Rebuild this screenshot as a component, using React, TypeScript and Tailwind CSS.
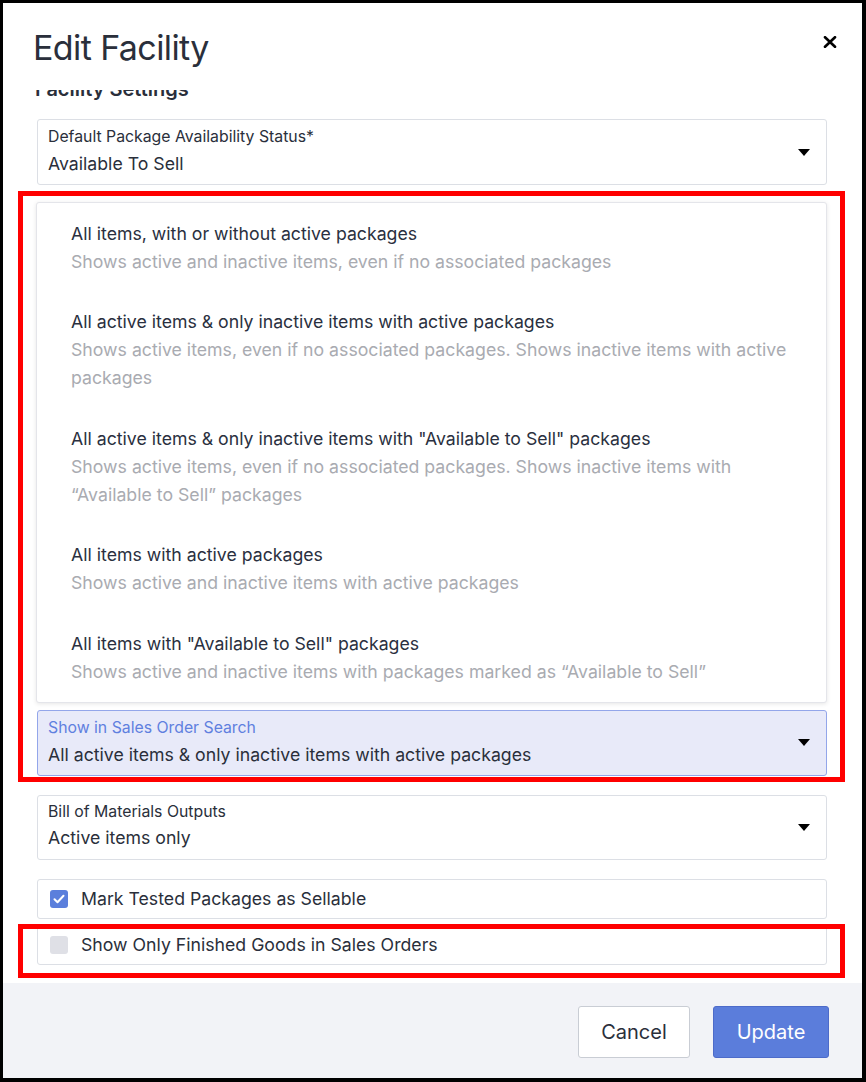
import React from "react";

function Caret() {
  return (
    <svg width="12" height="7" viewBox="0 0 12 7" className="shrink-0">
      <polygon points="0,0 12,0 6,7" fill="#000" />
    </svg>
  );
}

function Select({
  label,
  value,
  focused = false,
  compact = false,
}: {
  label: string;
  value: string;
  focused?: boolean;
  compact?: boolean;
}) {
  return (
    <div
      className={`flex items-center justify-between rounded-[3px] border pl-[10px] pr-[16px] ${
        compact ? "h-[65px]" : "h-[66px]"
      } ${focused ? "border-[#93a6ea] bg-[#e8eaf9]" : "border-[#dcdfe5] bg-white"}`}
    >
      <div className={`flex flex-col self-start ${compact ? "pt-[6px]" : "pt-[7px]"}`}>
        <div className={`text-[15.8px] leading-[20px] ${focused ? "text-[#5f80df]" : "text-[#2a2f3b]"}`}>
          {label}
        </div>
        <div className={`${compact ? "mt-[4px]" : "mt-[5px]"} text-[17.7px] leading-[24px] text-[#2a2f3b]`}>
          {value}
        </div>
      </div>
      <Caret />
    </div>
  );
}

const options: { title: string; desc: string[] }[] = [
  {
    title: "All items, with or without active packages",
    desc: ["Shows active and inactive items, even if no associated packages"],
  },
  {
    title: "All active items & only inactive items with active packages",
    desc: [
      "Shows active items, even if no associated packages. Shows inactive items with active",
      "packages",
    ],
  },
  {
    title: 'All active items & only inactive items with "Available to Sell" packages',
    desc: [
      "Shows active items, even if no associated packages. Shows inactive items with",
      "\u201cAvailable to Sell\u201d packages",
    ],
  },
  {
    title: "All items with active packages",
    desc: ["Shows active and inactive items with active packages"],
  },
  {
    title: 'All items with "Available to Sell" packages',
    desc: ["Shows active and inactive items with packages marked as \u201cAvailable to Sell\u201d"],
  },
];

function CheckRow({ label, checked }: { label: string; checked: boolean }) {
  return (
    <div className="flex h-[40px] items-center gap-[13px] rounded-[3px] border border-[#dcdfe5] bg-white pl-[12px]">
      {checked ? (
        <div className="flex h-[18px] w-[18px] items-center justify-center rounded-[3px] bg-[#5b7fdc]">
          <svg width="12" height="10" viewBox="0 0 12 10">
            <path d="M1.5 5.2l3 3 6-6.4" fill="none" stroke="#fff" strokeWidth="2" strokeLinecap="round" strokeLinejoin="round" />
          </svg>
        </div>
      ) : (
        <div className="h-[18px] w-[18px] rounded-[3px] bg-[#dfe0e6]" />
      )}
      <span className="text-[17.7px] leading-[24px] text-[#2a2f3b]">{label}</span>
    </div>
  );
}

export default function App() {
  return (
    <div className="relative flex h-[1082px] w-[866px] flex-col overflow-hidden border-black border-t-[3px] border-l-[3px] border-r-[4px] border-b-[4px] bg-white font-['Inter',sans-serif] text-[#2a2f3b]">
      <header className="flex h-[87px] shrink-0 items-start justify-between pl-[30px] pr-[25px]">
        <h1 className="mt-[25px] text-[34px] font-normal leading-[40px] tracking-[-0.6px] text-[#2a2f3b]">Edit Facility</h1>
        <button className="mt-[33px]" aria-label="Close">
          <svg width="14" height="12" viewBox="0 0 14 12">
            <path d="M2 1.2l10 9.6M12 1.2L2 10.8" stroke="#000" strokeWidth="2.6" strokeLinecap="round" />
          </svg>
        </button>
      </header>

      <div className="flex-1 overflow-hidden pl-[34px] pr-[35px]">
        <h2 className="-ml-[2px] -mt-[13px] text-[20px] font-semibold leading-[24px] text-[#2a2f3b]">Facility Settings</h2>

        <div className="mt-[18px]">
          <Select label="Default Package Availability Status*" value="Available To Sell" />
        </div>

        <div className="-ml-px mt-[17px] rounded-[3px] border border-[#e4e5ea] bg-white shadow-[0_1px_4px_rgba(0,0,0,0.10)]">
          {options.map((o) => (
            <div key={o.title} className="pb-[16px] pl-[34px] pr-[20px] pt-[16.5px]">
              <div className="whitespace-nowrap text-[17.7px] leading-[28px] text-[#2a3040]">{o.title}</div>
              {o.desc.map((d) => (
                <div key={d} className="whitespace-nowrap text-[17.7px] leading-[28px] text-[#a9abb1]">
                  {d}
                </div>
              ))}
            </div>
          ))}
        </div>

        <div className="mt-[7px]">
          <Select
            label="Show in Sales Order Search"
            value="All active items & only inactive items with active packages"
            focused
          />
        </div>

        <div className="mt-[19px]">
          <Select label="Bill of Materials Outputs" value="Active items only" compact />
        </div>

        <div className="mt-[19px] flex flex-col gap-[6px]">
          <CheckRow label="Mark Tested Packages as Sellable" checked />
          <CheckRow label="Show Only Finished Goods in Sales Orders" checked={false} />
        </div>
      </div>

      <footer className="flex h-[95px] shrink-0 items-start justify-end gap-[23px] bg-[#f2f3f7] pr-[33px] pt-[23px]">
        <button className="h-[52px] w-[112px] rounded-[3px] border border-[#c9cdd4] bg-white text-[20px] text-[#2a2f3b]">
          Cancel
        </button>
        <button className="h-[52px] w-[116px] rounded-[3px] border border-[#4d6bc9] bg-[#5b7ddb] text-[20px] text-white">
          Update
        </button>
      </footer>

      <div className="pointer-events-none absolute left-[15px] top-[188px] h-[591px] w-[827px] border-[5px] border-[#ff0000]" />
      <div className="pointer-events-none absolute left-[15px] top-[921px] h-[54px] w-[827px] border-[5px] border-[#ff0000]" />
    </div>
  );
}
